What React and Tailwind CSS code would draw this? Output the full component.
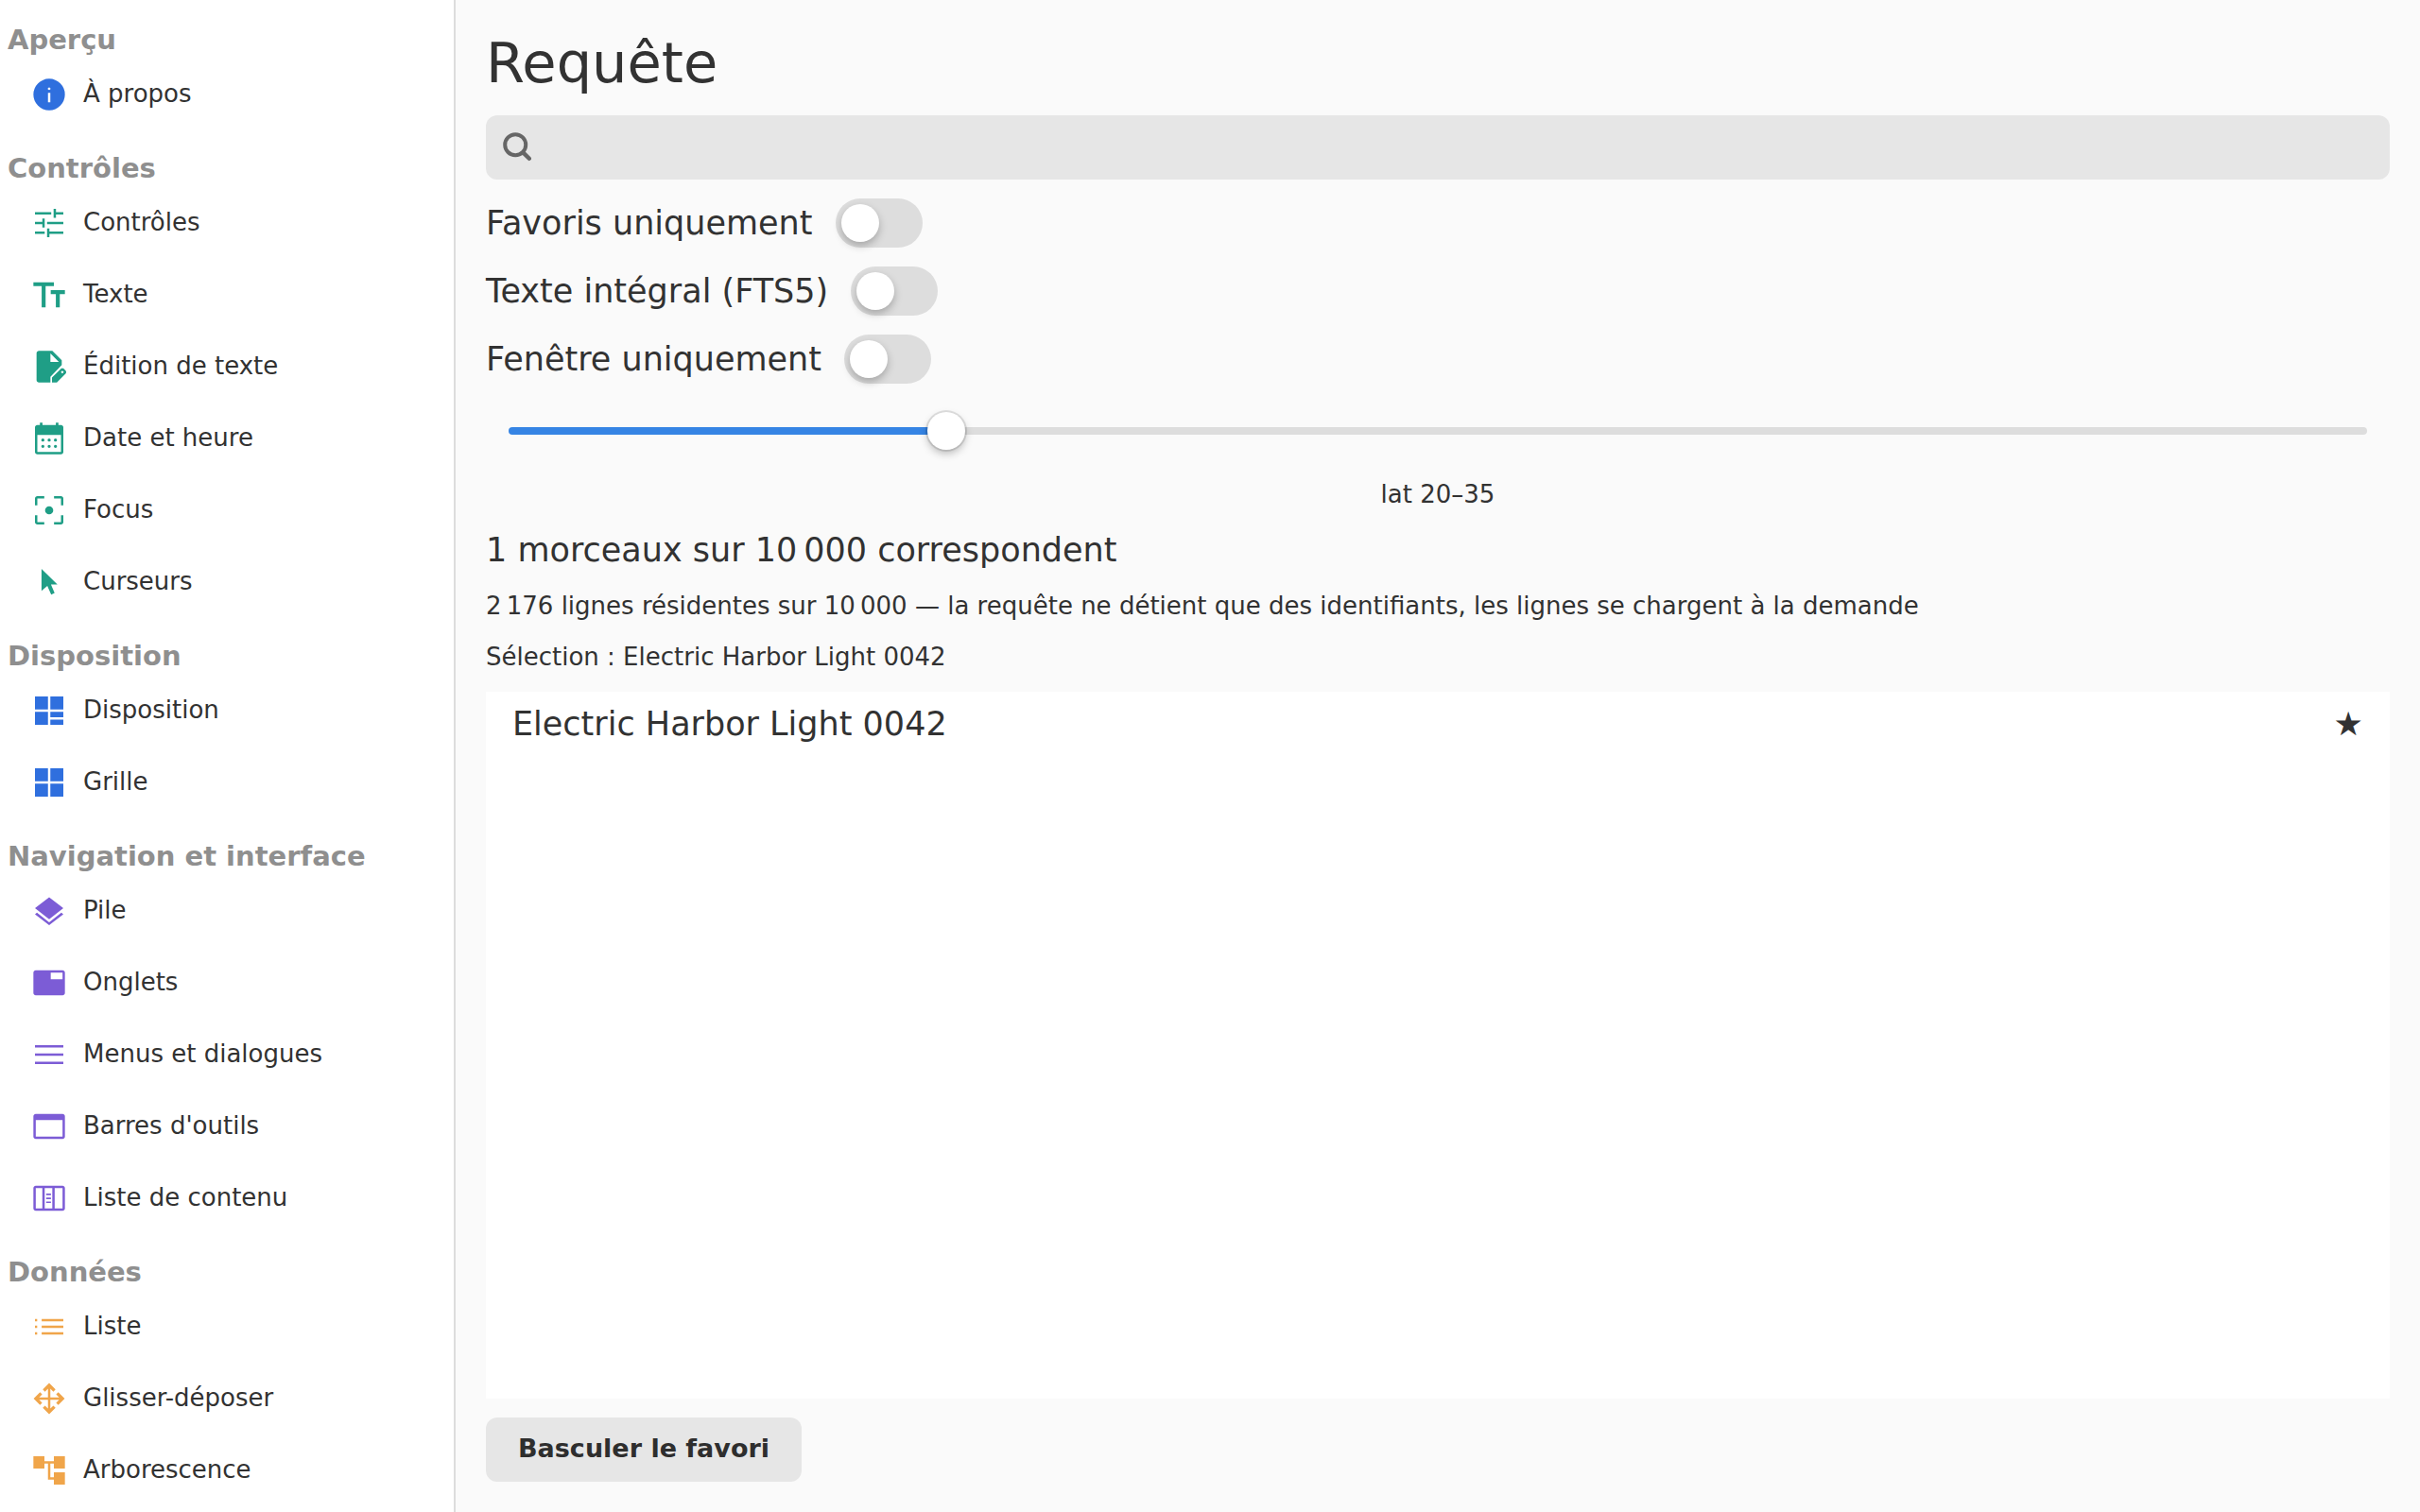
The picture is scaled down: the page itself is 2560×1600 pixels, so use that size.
import { useState } from "react"

// Trazos de los iconos, todos sobre una cuadricula de 960
const icons = {
  info: "M450-280h60v-240h-60v240Zm30-314q14 0 24-10t10-23q0-14-10-24t-24-10q-14 0-24 10t-10 24q0 13 10 23t24 10Zm0 514q-83 0-156-31t-127-86q-54-54-86-127T80-480q0-83 32-156t86-127q54-54 127-86t155-31q83 0 156 32t127 86q54 54 86 127t31 155q0 83-31 156t-86 127q-54 54-127 86T480-80Z",
  tune: "M427-120v-225h60v83h353v60H487v82h-60Zm-307-82v-60h247v60H120Zm187-166v-82H120v-60h187v-84h60v226h-60Zm120-82v-60h413v60H427Zm166-165v-225h60v82h187v60H653v83h-60Zm-473-83v-60h413v60H120Z",
  text: "M290-160v-540H80v-100h520v100H390v540H290Zm360 0v-340H520v-100h360v100H750v340H650Z",
  edit: "M552-80v-123l221-220q9-9 20-13t22-4q12 0 23 4.5t20 13.5l37 37q9 9 13 20t4 22q0 11-4.5 22.5T895-300L675-80H552Zm263-224 37-39-37-37-38 38 38 38ZM220-80q-24 0-42-18t-18-42v-680q0-24 18-42t42-18h341l239 239v121L512-220v140H220Zm292-736v215h215L512-816Z",
  calendar: "M180-80q-24 0-42-18t-18-42v-620q0-24 18-42t42-18h65v-60h65v60h340v-60h65v60h65q24 0 42 18t18 42v620q0 24-18 42t-42 18H180Zm0-60h600v-430H180v430ZM320-400a40 40 0 1 1 0-80 40 40 0 0 1 0 80Zm160 0a40 40 0 1 1 0-80 40 40 0 0 1 0 80Zm160 0a40 40 0 1 1 0-80 40 40 0 0 1 0 80ZM320-240a40 40 0 1 1 0-80 40 40 0 0 1 0 80Zm160 0a40 40 0 1 1 0-80 40 40 0 0 1 0 80Zm160 0a40 40 0 1 1 0-80 40 40 0 0 1 0 80Z",
  focus: "M180-120q-24 0-42-18t-18-42v-176h60v176h176v60H180Zm424 0v-60h176v-176h60v176q0 24-18 42t-42 18H604ZM120-604v-176q0-24 18-42t42-18h176v60H180v176h-60Zm660 0v-176H604v-60h176q24 0 42 18t18 42v176h-60ZM480-376a104 104 0 1 1 0-208 104 104 0 0 1 0 208Z",
  cursor: "M286-814 690-422H526l92 216-86 44-98-220-148 126v-558Z",
  layout: "M120-510v-330h330v330H120Zm0 390v-330h330v330H120Zm390-390v-330h330v330H510Zm0 195v-135h330v135H510Zm0 195v-135h330v135H510Z",
  grid: "M120-510v-330h330v330H120Zm0 390v-330h330v330H120Zm390-390v-330h330v330H510Zm0 390v-330h330v330H510Z",
  layers: "M480-118 120-398l50-38 310 241 310-241 50 38-360 280Zm0-152L120-550l360-280 360 280-360 280Z",
  tab: "M140-160q-24 0-42-18t-18-42v-520q0-24 18-42t42-18h680q24 0 42 18t18 42v520q0 24-18 42t-42 18H140Zm380-410h300v-170H520v170Z",
  menu: "M120-240v-60h720v60H120Zm0-210v-60h720v60H120Zm0-210v-60h720v60H120Z",
  toolbar: "M140-160q-24 0-42-18t-18-42v-520q0-24 18-42t42-18h680q24 0 42 18t18 42v520q0 24-18 42t-42 18H140Zm0-60h680v-423H140v423Z",
  columns: "M140-160q-24 0-42-18t-18-42v-520q0-24 18-42t42-18h680q24 0 42 18t18 42v520q0 24-18 42t-42 18H140Zm0-60h167v-520H140v520Zm227 0h193v-520H367v520Zm253 0h200v-520H620v520ZM405-560v-40h120v40H405Zm0 102v-40h120v40H405Zm0 100v-40h120v40H405Z",
  list: "M290-620v-60h550v60H290Zm0 170v-60h550v60H290Zm0 170v-60h550v60H290ZM120-620v-60h56v60h-56Zm0 170v-60h56v60h-56Zm0 170v-60h56v60h-56Z",
  move: "M480-86 318-248l55-55 77 77v-224H226l77 77-55 55L86-480l162-162 55 55-77 77h224v-224l-77 77-55-55 162-162 162 162-55 55-77-77v224h224l-77-77 55-55 162 162-162 162-55-55 77-77H510v224l77-77 55 55L480-86Z",
  tree: "M600-120v-125H450v-410h-90v125H80v-310h280v125h240v-125h280v310H600v-125h-90v350h90v-125h280v310H600Z",
}

const sections = [
  {
    title: "Aperçu",
    color: "text-[#2f6fde]",
    items: [{ icon: "info", label: "À propos" }],
  },
  {
    title: "Contrôles",
    color: "text-[#1f9e86]",
    items: [
      { icon: "tune", label: "Contrôles" },
      { icon: "text", label: "Texte" },
      { icon: "edit", label: "Édition de texte" },
      { icon: "calendar", label: "Date et heure" },
      { icon: "focus", label: "Focus" },
      { icon: "cursor", label: "Curseurs" },
    ],
  },
  {
    title: "Disposition",
    color: "text-[#2f6fde]",
    items: [
      { icon: "layout", label: "Disposition" },
      { icon: "grid", label: "Grille" },
    ],
  },
  {
    title: "Navigation et interface",
    color: "text-[#7c5cd6]",
    items: [
      { icon: "layers", label: "Pile" },
      { icon: "tab", label: "Onglets" },
      { icon: "menu", label: "Menus et dialogues" },
      { icon: "toolbar", label: "Barres d'outils" },
      { icon: "columns", label: "Liste de contenu" },
    ],
  },
  {
    title: "Données",
    color: "text-[#f0a54a]",
    items: [
      { icon: "list", label: "Liste" },
      { icon: "move", label: "Glisser-déposer" },
      { icon: "tree", label: "Arborescence" },
    ],
  },
]

const Icon = ({ name, className }) => (
  <svg viewBox="0 -960 960 960" fill="currentColor" fillRule="evenodd" aria-hidden="true" className={`size-10 shrink-0 ${className}`}>
    <path d={icons[name]} />
  </svg>
)

const Sidebar = () => (
  <nav className="w-[482px] shrink-0 overflow-hidden border-r-2 border-[#dcdcdc] bg-white pt-0.5">
    {sections.map((section) => (
      <section key={section.title}>
        <h2 className="flex h-[60px] items-end px-2 pb-[3px] text-[29px] leading-[34px] font-bold text-[#8f8f8f]">{section.title}</h2>
        <ul>
          {section.items.map((item) => (
            <li key={item.label}>
              <a href="#" className="flex h-[76px] items-center gap-4 pl-8">
                <Icon name={item.icon} className={section.color} />
                <span className="pb-0.5 text-[26px] leading-[34px]">{item.label}</span>
              </a>
            </li>
          ))}
        </ul>
      </section>
    ))}
  </nav>
)

const Toggle = ({ id, label }) => (
  <div className="flex items-center gap-6">
    <label htmlFor={id} className="text-[35px] leading-[44px]">{label}</label>
    <span className="relative flex h-[52px] w-[92px]">
      <input id={id} type="checkbox" role="switch" className="peer h-full w-full appearance-none rounded-full bg-[#dddddd] checked:bg-[#3584e4]" />
      <span className="pointer-events-none absolute top-1.5 left-1.5 size-10 rounded-full bg-white shadow-[0_4px_8px_rgba(0,0,0,0.25)] peer-checked:translate-x-10" />
    </span>
  </div>
)

const App = () => {
  const [search, setSearch] = useState("")
  const [lat, setLat] = useState(23)

  return (
    <div className="flex h-screen overflow-hidden bg-[#fafafa] font-['DejaVu_Sans',sans-serif] text-[#323232]">
      <Sidebar />

      <main className="flex min-w-0 flex-1 flex-col gap-5 p-8">
        <h1 className="text-[59px] leading-[70px]">Requête</h1>

        {/* Busqueda */}
        <div className="flex h-[68px] shrink-0 items-center gap-3 rounded-xl bg-[#e6e6e6] px-4">
          <svg viewBox="0 0 16 16" fill="none" stroke="currentColor" aria-hidden="true" className="size-8 shrink-0 text-[#666666]">
            <circle cx="7.6" cy="6.6" r="5.5" strokeWidth="2" />
            <path d="m11.8 10.8 3.1 3.1" strokeWidth="2.2" strokeLinecap="round" />
          </svg>
          <input type="search" aria-label="Rechercher" value={search} onChange={(e) => setSearch(e.target.value)} className="h-full min-w-0 flex-1 bg-transparent text-[26px] outline-none" />
        </div>

        {/* Filtros */}
        <Toggle id="favoris" label="Favoris uniquement" />
        <Toggle id="fts" label="Texte intégral (FTS5)" />
        <Toggle id="fenetre" label="Fenêtre uniquement" />

        <div className="flex h-[60px] shrink-0 items-center px-6">
          <input
            id="lat"
            type="range"
            min="0"
            max="100"
            value={lat}
            onChange={(e) => setLat(Number(e.target.value))}
            style={{ backgroundImage: `linear-gradient(to right, #3584e4 ${lat}%, #dddddd ${lat}%)` }}
            className="h-2 w-full appearance-none rounded-full [&::-webkit-slider-thumb]:size-10 [&::-webkit-slider-thumb]:appearance-none [&::-webkit-slider-thumb]:rounded-full [&::-webkit-slider-thumb]:bg-white [&::-webkit-slider-thumb]:shadow-[0_0_0_2px_rgba(0,0,0,0.1),0_4px_8px_rgba(0,0,0,0.25)]"
          />
        </div>
        <label htmlFor="lat" className="text-center text-[26px] leading-[34px]">lat 20–35</label>

        <p className="text-[35px] leading-[44px]">1 morceaux sur 10{"\u202f"}000 correspondent</p>
        <p className="text-[26px] leading-[34px]">
          2{"\u202f"}176 lignes résidentes sur 10{"\u202f"}000 — la requête ne détient que des identifiants, les lignes se chargent à la demande
        </p>
        <p className="text-[26px] leading-[34px]">Sélection : Electric Harbor Light 0042</p>

        {/* Resultados */}
        <ul className="min-h-0 flex-1 overflow-y-auto bg-white">
          <li>
            <button className="flex h-[68px] w-full items-center justify-between px-7 text-[35px] leading-[44px]">
              <span>Electric Harbor Light 0042</span>
              <span>★</span>
            </button>
          </li>
        </ul>

        <button className="h-[68px] shrink-0 self-start rounded-xl bg-[#e6e6e6] px-[34px] pb-0.5 text-[27px] leading-[34px] font-bold text-[#2e2e2e]">
          Basculer le favori
        </button>
      </main>
    </div>
  )
}

export default App
